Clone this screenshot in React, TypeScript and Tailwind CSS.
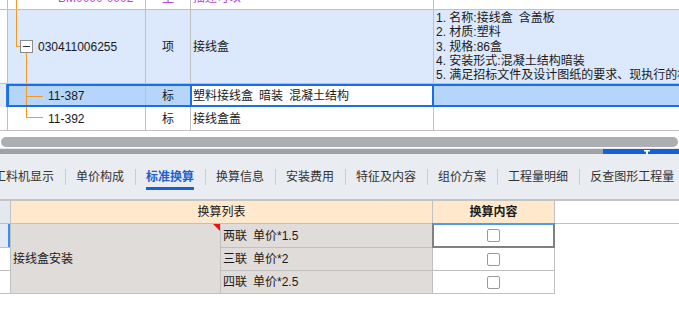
import React from "react";

const LINE = "border-[#c0c0c0]";
const ORANGE = "bg-[#f59a23]";

const SPEC = [
  "1. 名称:接线盒\u2002含盖板",
  "2. 材质:塑料",
  "3. 规格:86盒",
  "4. 安装形式:混凝土结构暗装",
  "5. 满足招标文件及设计图纸的要求、现执行的相关规范",
];

const TABS = ["工料机显示", "单价构成", "标准换算", "换算信息", "安装费用", "特征及内容", "组价方案", "工程量明细", "反查图形工程量"];

const OPTIONS = ["两联\u2002单价*1.5", "三联\u2002单价*2", "四联\u2002单价*2.5"];

function TopGrid() {
  return (
    <div className="h-[131px] overflow-hidden">
      <div className="-mt-[13px] w-[760px] text-[12px] text-[#1a1a1a]">
        {/* row 0, mostly scrolled away */}
        <div className={`flex h-[23px] border-b ${LINE} text-[#b443d6]`}>
          <div className={`w-[8px] border-r ${LINE}`} />
          <div className={`relative flex w-[138px] items-center border-r ${LINE} pl-[50px]`}>
            <span className={`absolute left-[8px] top-0 bottom-0 w-px ${ORANGE}`} />
            BM0000-0002
          </div>
          <div className={`flex w-[45px] items-center justify-center border-r ${LINE}`}>主</div>
          <div className={`flex w-[243px] items-center border-r ${LINE} pl-[2px]`}>描述可以</div>
          <div className="flex-1" />
        </div>

        {/* row 1 */}
        <div className={`flex h-[74px] border-b ${LINE}`}>
          <div className={`w-[8px] border-r ${LINE}`} />
          <div className={`relative flex w-[138px] items-center border-r ${LINE} bg-[#dce8fc] pl-[30px]`}>
            <span className={`absolute left-[8px] top-0 h-[36px] w-px ${ORANGE}`} />
            <span className={`absolute left-[8px] top-[36px] h-px w-[4px] ${ORANGE}`} />
            <span className={`absolute left-[18px] top-[43px] bottom-0 w-px ${ORANGE}`} />
            <span className="absolute left-[12px] top-[30px] flex h-[13px] w-[13px] items-center justify-center border border-[#8c8c8c] bg-white">
              <span className="h-px w-[7px] bg-[#333]" />
            </span>
            030411006255
          </div>
          <div className={`flex w-[45px] items-center justify-center border-r ${LINE} bg-[#dce8fc]`}>项</div>
          <div className={`flex w-[243px] items-center border-r ${LINE} bg-[#dce8fc] pl-[2px]`}>接线盒</div>
          <div className="flex-1 whitespace-nowrap bg-[#dce8fc] pl-[2px] pt-[1px] leading-[14.25px]">
            {SPEC.map((s) => (
              <div key={s}>{s}</div>
            ))}
          </div>
        </div>

        {/* row 2, selected */}
        <div className="flex h-[23px]">
          <div className="w-[7px] bg-[#e4ebf5]">
            <div className="ml-[6px] h-full w-px bg-[#2b7de9]" />
          </div>
          <div className="flex flex-1 border-y-2 border-l-2 border-[#1a6fe8] bg-[#b5d5fb]">
            <div className={`relative flex w-[137px] items-center border-r ${LINE} pl-[39px]`}>
              <span className={`absolute left-[17px] top-0 bottom-0 w-px ${ORANGE}`} />
              <span className={`absolute left-[17px] top-[10px] h-px w-[17px] ${ORANGE}`} />
              11-387
            </div>
            <div className="flex w-[44px] items-center justify-center">标</div>
            <div className="flex w-[244px] items-center border-x-2 border-[#1a6fe8] bg-white pl-px">
              塑料接线盒{"\u2002"}暗装{"\u2002"}混凝土结构
            </div>
            <div className="flex-1" />
          </div>
        </div>

        {/* row 3 */}
        <div className={`flex h-[24px] border-b ${LINE}`}>
          <div className={`w-[8px] border-r ${LINE}`} />
          <div className={`relative flex w-[138px] items-center border-r ${LINE} pl-[40px]`}>
            <span className={`absolute left-[18px] top-0 h-[10px] w-px ${ORANGE}`} />
            <span className={`absolute left-[18px] top-[10px] h-px w-[17px] ${ORANGE}`} />
            11-392
          </div>
          <div className={`flex w-[45px] items-center justify-center border-r ${LINE}`}>标</div>
          <div className={`flex w-[243px] items-center border-r ${LINE} pl-[2px]`}>接线盒盖</div>
          <div className="flex-1" />
        </div>
      </div>
    </div>
  );
}

function Tabs() {
  return (
    <div className="flex h-[45px] items-center overflow-hidden bg-[#e9ecf0] text-[12px] text-[#333]">
      <div className="-ml-[16px] flex h-full shrink-0 items-center whitespace-nowrap">
        {TABS.map((t, i) => (
          <React.Fragment key={t}>
            {i > 0 && <span className="h-[16px] w-px shrink-0 bg-[#c9cdd2]" />}
            <div className="relative flex h-full shrink-0 items-center pl-[10px] pr-[11px]">
              <span className={i === 2 ? "font-semibold text-[#1f5fcf]" : ""}>{t}</span>
              {i === 2 && <span className="absolute bottom-[9px] left-[10px] right-[11px] h-[3px] bg-[#1a5fd8]" />}
            </div>
          </React.Fragment>
        ))}
      </div>
    </div>
  );
}

function Checkbox() {
  return <span className="block h-[13px] w-[13px] rounded-[2px] border border-[#9a9a9a] bg-white" />;
}

function ConvertTable() {
  return (
    <div className="text-[12px] text-[#1a1a1a]">
      <div className={`flex h-[23px] border-b ${LINE}`}>
        <div className={`w-[11px] border-r ${LINE} bg-[#e4e9f0]`} />
        <div className={`flex w-[422px] items-center justify-center border-r ${LINE} bg-[#ffe8cc]`}>换算列表</div>
        <div className={`flex w-[122px] items-center justify-center border-r ${LINE} bg-[#ffe8cc] font-bold`}>换算内容</div>
      </div>
      <div className="flex">
        <div className="flex w-[11px] flex-col">
          <div className={`h-[24px] border-r border-b ${LINE} bg-[#e3eaf5]`}>
            <div className="ml-[8px] h-full w-[2px] bg-[#3b8ef0]" />
          </div>
          <div className={`h-[23px] border-r border-b ${LINE}`} />
          <div className={`h-[23px] border-r border-b ${LINE}`} />
        </div>
        <div className={`relative flex h-[70px] w-[210px] items-center border-r border-b ${LINE} bg-[#e0dcd9] pl-[2px]`}>
          <span className="absolute right-0 top-0 h-0 w-0 border-l-[7px] border-t-[7px] border-l-transparent border-t-[#f01010]" />
          接线盒安装
        </div>
        <div className="flex flex-col">
          {OPTIONS.map((o, i) => (
            <div key={o} className="flex">
              <div className={`flex ${i === 0 ? "h-[24px]" : "h-[23px]"} w-[212px] items-center border-r border-b ${LINE} bg-[#e0dcd9] pl-[2px]`}>
                {o}
              </div>
              <div className={`relative flex ${i === 0 ? "h-[24px]" : "h-[23px]"} w-[122px] items-center justify-center border-r border-b ${LINE} bg-white`}>
                {i === 0 && (
                  <span className="absolute -left-px -top-px -right-px -bottom-px border-2 border-[#808080] border-t-[#4b9bf2]" />
                )}
                <Checkbox />
              </div>
            </div>
          ))}
        </div>
      </div>
    </div>
  );
}

export default function App() {
  return (
    <div className="h-[310px] w-[679px] overflow-hidden bg-white font-['Liberation_Sans','Noto_Sans_CJK_SC',sans-serif]">
      <TopGrid />
      <div className="h-[6px] bg-white" />
      <div className="h-[11px] bg-white px-[1px]">
        <div className="h-[10px] rounded-full bg-[#abaeb3]" />
      </div>
      <div className="h-[1px] bg-[#e4e6e9]" />
      <div className="flex h-[5px]">
        <div className="flex-1 bg-[#9fa1a4]" />
        <div className="relative w-[76px] bg-[#1560d6]">
          <svg className="absolute left-[41px] top-[1px]" width="6" height="4" viewBox="0 0 6 4">
            <path d="M0 0h6v1.5H4V4H2V1.5H0z" fill="#fff" />
          </svg>
        </div>
      </div>
      <Tabs />
      <div className="h-[2px] bg-[#c4c4c4]" />
      <ConvertTable />
    </div>
  );
}
